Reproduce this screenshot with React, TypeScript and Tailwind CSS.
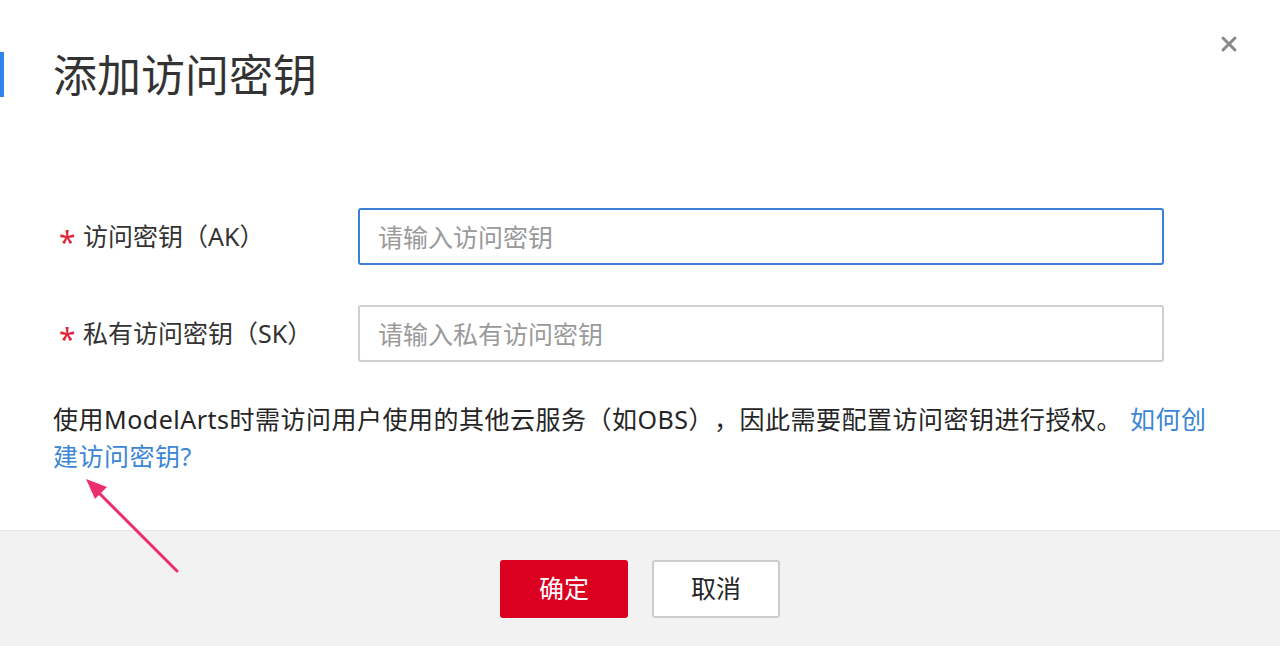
import { X } from "lucide-react";

const font = {
  fontFamily: '"Noto Sans", "Noto Sans CJK SC", sans-serif',
  textSpacingTrim: "space-all",
} as React.CSSProperties;

function Field({ label, placeholder, focused }: { label: string; placeholder: string; focused?: boolean }) {
  return (
    <div className="flex items-center">
      <label className="w-[358px] pl-[59px] flex items-center text-[25px] text-[#333]">
        <span className="text-[#e0243a] w-[24px] text-[30px] leading-none mt-[10px]">*</span>
        {label}
      </label>
      <input
        placeholder={placeholder}
        className={`w-[806px] h-[57px] rounded-[3px] bg-white px-[18px] text-[25px] placeholder:text-[#9a9a9a] outline-none border-2 ${
          focused ? "border-[#3d7fd6]" : "border-[#cfcfcf]"
        }`}
        style={font}
      />
    </div>
  );
}

export default function App() {
  return (
    <div className="relative w-full h-[646px] bg-white flex flex-col overflow-hidden" style={font}>
      <div className="flex items-start pt-[52px] h-[208px]">
        <div className="w-[4px] h-[45px] bg-[#2f86e8]" />
        <h1 className="ml-[49px] text-[44px] leading-[46px] text-[#333] font-normal">添加访问密钥</h1>
      </div>
      <button className="absolute top-[32px] right-[39px] text-[#888]">
        <X size={24} strokeWidth={3} />
      </button>

      <div className="flex flex-col gap-[40px]">
        <Field label="访问密钥（AK）" placeholder="请输入访问密钥" focused />
        <Field label="私有访问密钥（SK）" placeholder="请输入私有访问密钥" />
      </div>

      <p className="pl-[53px] pr-[60px] mt-[39px] text-[25px] leading-[37px] tracking-[0.5px] text-[#252525]">
        使用ModelArts时需访问用户使用的其他云服务（如OBS），因此需要配置访问密钥进行授权。
        <a className="text-[#3c86d8] ml-[8px] cursor-pointer">如何创建访问密钥?</a>
      </p>

      <div className="mt-auto h-[116px] bg-[#f2f2f2] border-t border-[#e6e6e6] flex items-center justify-center gap-[24px]">
        <button className="w-[128px] h-[58px] rounded-[3px] bg-[#db0020] text-white text-[25px]">确定</button>
        <button className="w-[128px] h-[58px] rounded-[3px] bg-white border-2 border-[#cdcdcd] text-[#252525] text-[25px]">
          取消
        </button>
      </div>

      <svg className="absolute left-0 top-0 pointer-events-none" width="1280" height="646">
        <line x1="177" y1="571" x2="95" y2="489" stroke="#ec2f6c" strokeWidth="3" strokeLinecap="round" />
        <polygon points="86,479 107,487 95,499" fill="#ec2f6c" />
      </svg>
    </div>
  );
}
